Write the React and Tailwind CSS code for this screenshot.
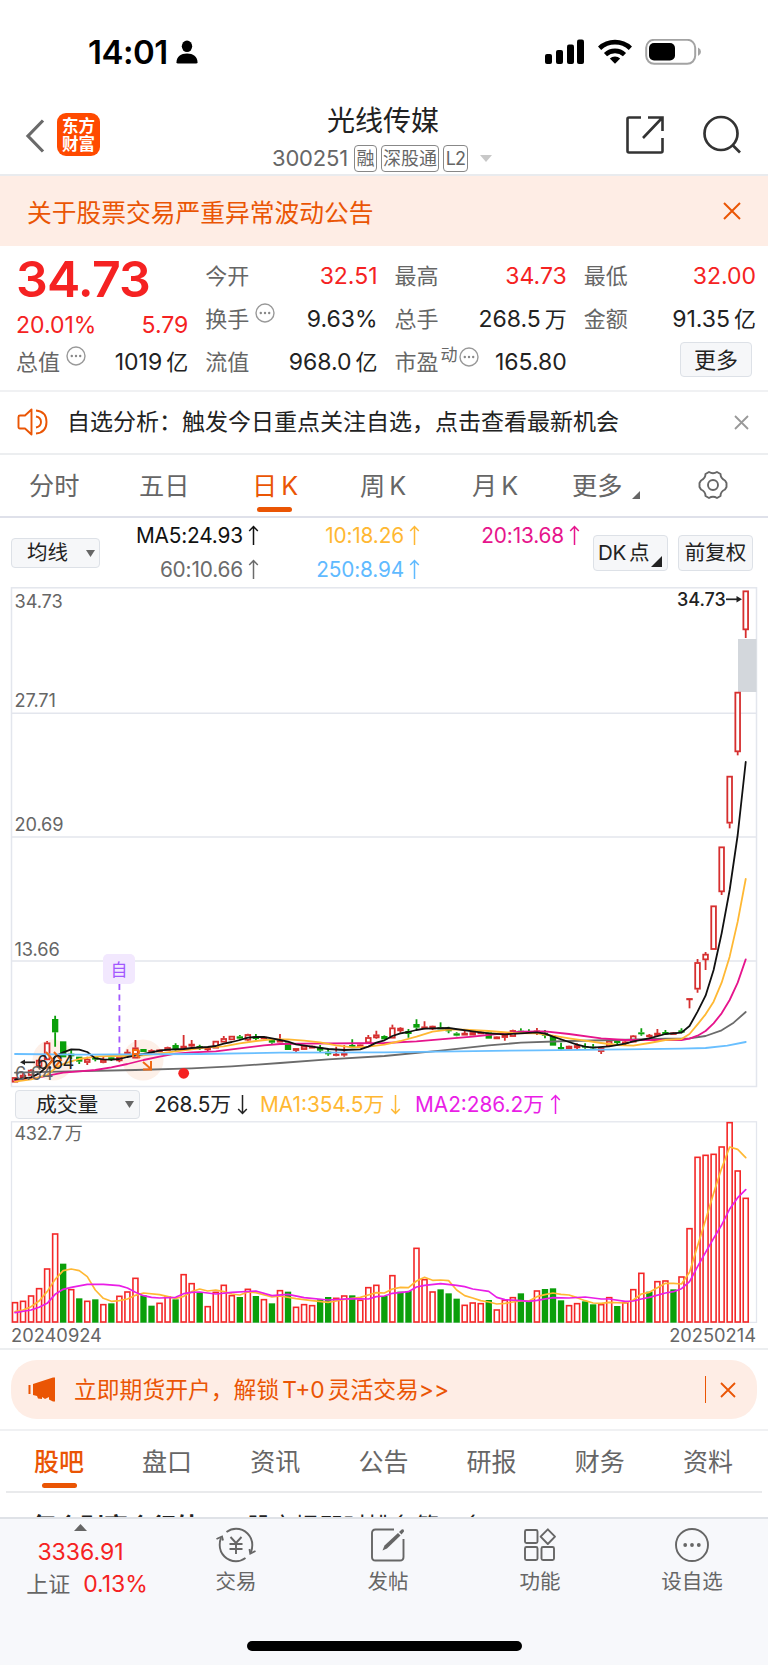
const X0 = 45;
const STEP = 24.09;
const barX = (i) => X0 + i * STEP;

// [up, high, body top, body bottom, low]
const CANDLES = [
  [1, 352, 352, 367, 367], [1, 338, 345, 354, 354], [1, 328, 330, 347, 347], [1, 298, 300, 320, 325],
  [1, 243, 248, 300, 300], [0, 167, 177, 217, 260], [0, 244, 244, 292, 292], [0, 270, 281, 289, 297],
  [0, 290, 290, 305, 312], [1, 290, 297, 308, 315], [0, 290, 290, 299, 304], [1, 288, 298, 308, 310],
  [0, 288, 292, 299, 303], [1, 280, 289, 303, 307], [1, 268, 276, 284, 284], [1, 240, 263, 295, 295],
  [0, 267, 267, 276, 276], [1, 268, 271, 279, 281], [1, 268, 269, 276, 276], [1, 260, 262, 272, 272],
  [0, 250, 255, 270, 272], [1, 225, 258, 266, 268], [1, 240, 252, 259, 262], [0, 254, 258, 266, 270],
  [1, 262, 263, 270, 275], [1, 243, 243, 265, 265], [1, 228, 235, 247, 247], [1, 228, 228, 240, 240],
  [0, 225, 229, 236, 240], [1, 221, 223, 241, 244], [0, 222, 229, 237, 241], [1, 230, 231, 237, 238],
  [0, 238, 240, 248, 251], [1, 222, 240, 247, 247], [0, 247, 247, 270, 270], [1, 264, 265, 272, 276],
  [1, 256, 258, 269, 269], [1, 257, 258, 265, 265], [0, 255, 262, 272, 278], [0, 265, 275, 283, 287],
  [1, 260, 282, 287, 289], [1, 255, 279, 286, 290], [0, 238, 255, 261, 264], [1, 253, 254, 262, 262],
  [1, 225, 232, 249, 251], [1, 212, 224, 234, 236], [0, 226, 228, 238, 238], [1, 194, 203, 235, 235],
  [1, 202, 204, 213, 218], [0, 207, 213, 222, 233], [0, 178, 192, 203, 210], [1, 184, 200, 206, 208],
  [1, 197, 198, 207, 210], [0, 187, 202, 208, 208], [0, 200, 206, 214, 220], [0, 217, 220, 227, 229],
  [1, 210, 219, 226, 226], [1, 214, 217, 226, 226], [1, 214, 216, 222, 222], [0, 217, 217, 236, 236],
  [1, 229, 230, 237, 237], [1, 223, 225, 233, 242], [1, 209, 211, 230, 230], [0, 205, 212, 218, 218],
  [0, 208, 213, 220, 220], [1, 204, 212, 219, 225], [0, 210, 218, 227, 235], [0, 227, 227, 257, 257],
  [0, 248, 261, 268, 270], [1, 257, 258, 267, 268], [1, 250, 256, 264, 270], [0, 250, 258, 263, 266],
  [0, 252, 260, 265, 267], [1, 262, 263, 275, 282], [1, 241, 243, 258, 258], [0, 242, 243, 249, 252],
  [1, 241, 245, 251, 255], [1, 225, 227, 247, 247], [0, 205, 217, 223, 227], [1, 222, 225, 231, 233],
  [1, 207, 219, 227, 229], [0, 210, 216, 223, 225], [1, 216, 218, 224, 224], [0, 205, 211, 218, 220],
  [1, 115, 115, 118, 145], [1, -3, 7, 88, 98], [1, -24, -18, 0, 30], [1, -163, -163, -31, -31],
  [1, -340, -340, -204, -195], [1, -552, -552, -410, -395], [1, -804, -804, -624, -614], [1, -1108, -1108, -990, -966],
];

// [bar index, y]
const PRICE_LINES = [
  {
    color: "#6b6b6b",
    data: [[0, 338], [7, 334], [15, 330], [22, 325], [27, 319], [33, 309], [39, 298], [46, 288], [53, 272], [59, 256], [63, 248], [69, 243], [75, 240], [81, 236], [84, 235], [86, 228], [88, 211], [89.5, 188], [91, 156]],
  },
  {
    color: "#e6148c",
    data: [[0, 362], [3, 352], [6, 338], [8, 334], [10, 330], [12, 322], [14, 312], [16, 300], [18, 290], [20, 281], [22, 277], [25, 274], [28, 265], [31, 256], [33, 252], [36, 251], [46, 249], [50, 244], [54, 236], [57, 230], [60, 222], [63, 215], [66, 214], [69, 222], [73, 235], [76, 240], [80, 240], [83, 240], [84, 236], [85, 227], [86, 213], [87, 190], [88, 160], [89, 120], [90, 68], [91, -2]],
  },
  {
    color: "#ffb833",
    data: [[0, 365], [2, 358], [4, 345], [5, 325], [6, 312], [7, 304], [8, 297], [10, 290], [12, 288], [14, 288], [16, 286], [18, 280], [20, 274], [22, 268], [24, 262], [26, 259], [28, 250], [30, 243], [32, 238], [34, 238], [36, 242], [38, 247], [40, 256], [42, 262], [44, 260], [46, 254], [48, 243], [50, 230], [52, 215], [54, 209], [56, 209], [59, 213], [62, 219], [65, 220], [67, 227], [69, 235], [71, 242], [73, 249], [75, 255], [77, 257], [79, 249], [81, 240], [83, 237], [84, 222], [85, 193], [86, 163], [87, 125], [88, 68], [89, -10], [90, -115], [91, -243]],
  },
  {
    color: "#111111",
    data: [[0, 358], [2, 352], [3, 340], [4, 320], [5, 290], [6, 277], [7, 268], [8, 269], [9, 276], [10, 295], [11, 298], [12, 299], [13, 297], [14, 291], [15, 286], [16, 282], [17, 277], [18, 272], [19, 269], [21, 267], [22, 264], [24, 261], [25, 258], [26, 251], [27, 246], [28, 240], [29, 233], [30, 231], [31, 231], [32, 235], [33, 240], [34, 245], [35, 253], [37, 260], [39, 267], [41, 270], [43, 268], [44, 260], [45, 248], [46, 241], [47, 228], [48, 220], [49, 216], [50, 210], [51, 206], [54, 204], [57, 214], [59, 220], [61, 223], [65, 217], [66, 221], [67, 230], [69, 246], [70, 254], [71, 260], [72, 263], [74, 259], [76, 251], [77, 244], [79, 235], [81, 222], [83, 218], [84, 198], [85, 155], [86, 107], [87, 30], [88, -80], [89, -210], [90, -375], [91, -594]],
  },
  {
    color: "#69bfff",
    data: [[0, 282], [8, 284], [23, 282], [33, 278], [46, 277], [65, 271], [76, 268], [83, 266], [86, 264], [88.7, 257], [91, 246]],
  },
];

// [up, bar top]
const VOLUMES = [
  [1, 577], [1, 573], [1, 557], [1, 535], [1, 476], [1, 371], [0, 461], [1, 538], [0, 565], [1, 573],
  [0, 568], [1, 583], [0, 580], [1, 558], [1, 545], [1, 504], [0, 556], [0, 587], [1, 579], [1, 560],
  [0, 568], [1, 493], [1, 520], [0, 546], [1, 589], [1, 546], [1, 525], [1, 556], [0, 561], [1, 537],
  [0, 558], [1, 568], [0, 580], [1, 541], [0, 545], [1, 591], [1, 583], [1, 586], [0, 568], [0, 561],
  [1, 564], [1, 557], [0, 556], [1, 570], [1, 532], [1, 525], [0, 558], [1, 496], [0, 545], [0, 543],
  [1, 414], [1, 508], [1, 545], [0, 538], [0, 550], [0, 566], [1, 585], [1, 578], [1, 580], [0, 570],
  [1, 599], [1, 570], [1, 562], [0, 550], [0, 572], [1, 542], [0, 537], [0, 535], [0, 571], [1, 586],
  [1, 580], [0, 574], [0, 583], [1, 583], [1, 562], [0, 588], [1, 577], [1, 538], [1, 489], [0, 545],
  [1, 514], [1, 512], [0, 538], [1, 500], [1, 355], [1, 141], [1, 135], [1, 132], [1, 110], [1, 37],
  [1, 182], [1, 264],
];

const VOLUME_LINES = [
  {
    color: "#ffb833",
    data: [[0, 605], [1, 600], [2, 590], [3, 573], [4, 545], [5, 508], [6, 482], [7, 477], [8, 482], [9, 500], [10, 540], [11, 565], [12, 574], [13, 572], [14, 567], [15, 556], [16, 549], [18, 554], [20, 565], [21, 559], [22, 545], [23, 537], [24, 543], [25, 540], [26, 545], [27, 552], [28, 555], [29, 546], [30, 548], [32, 561], [33, 558], [35, 566], [37, 572], [39, 577], [41, 568], [43, 562], [44, 555], [45, 548], [46, 549], [47, 537], [48, 532], [49, 533], [50, 513], [51, 502], [52, 511], [53, 510], [54, 512], [55, 540], [56, 557], [57, 564], [58, 572], [59, 576], [60, 582], [61, 580], [62, 576], [63, 573], [64, 573], [65, 560], [66, 554], [67, 549], [68, 553], [69, 555], [70, 563], [71, 572], [72, 579], [73, 580], [74, 577], [76, 579], [77, 570], [78, 552], [79, 547], [80, 533], [81, 520], [82, 520], [83, 522], [84, 487], [85, 408], [86, 330], [87, 250], [88, 175], [89, 111], [90, 118], [91, 143]],
  },
  {
    color: "#e91ee6",
    data: [[0, 608], [2, 600], [3, 592], [4, 580], [5, 553], [6, 538], [7, 532], [9, 523], [11, 523], [13, 527], [14, 534], [15, 547], [16, 557], [17, 562], [18, 564], [20, 562], [21, 551], [22, 547], [23, 546], [25, 552], [27, 547], [30, 543], [32, 557], [34, 553], [36, 563], [39, 570], [42, 566], [44, 567], [45, 560], [46, 558], [47, 550], [49, 545], [50, 531], [51, 526], [53, 521], [55, 526], [56, 530], [57, 537], [59, 544], [60, 562], [61, 569], [63, 572], [64, 574], [65, 571], [67, 563], [69, 564], [71, 561], [73, 567], [74, 567], [76, 574], [77, 573], [78, 567], [79, 562], [81, 549], [82, 545], [83, 536], [84, 515], [85, 470], [86, 427], [87, 385], [88, 345], [89, 297], [90, 263], [91, 239]],
  },
];

const toPoints = (data) => data.map(([i, y]) => `${barX(i)},${y}`).join(" ");

function Cross({ size, className, width = 2 }) {
  return (
    <svg width={size} height={size} viewBox={`0 0 ${size} ${size}`} className={className} stroke="currentColor" strokeWidth={width}>
      <path d={`M1 1L${size - 1} ${size - 1}M${size - 1} 1L1 ${size - 1}`} />
    </svg>
  );
}

function Arrow({ down, className = "" }) {
  return (
    <svg width="11" height="21" viewBox="0 0 11 21" fill="none" stroke="currentColor" strokeWidth="1.5" className={className}>
      {down ? <path d="M5.5 1V19.5M1.2 15L5.5 19.5L9.8 15" /> : <path d="M5.5 20V1.5M1.2 6L5.5 1.5L9.8 6" />}
    </svg>
  );
}

function Info({ className = "" }) {
  return (
    <svg width="20" height="20" viewBox="0 0 20 20" className={className}>
      <circle cx="10" cy="10" r="9" fill="none" stroke="#999" strokeWidth="1.4" />
      <circle cx="5.8" cy="10" r="1.2" fill="#888" />
      <circle cx="10" cy="10" r="1.2" fill="#888" />
      <circle cx="14.2" cy="10" r="1.2" fill="#888" />
    </svg>
  );
}

function StatusBar() {
  return (
    <div className="h-[102px] flex items-start pt-[36px] pl-[88px] pr-[67px]">
      <span className="text-[33px] leading-[33px] font-semibold tracking-[-0.5px] text-black">14:01</span>
      <svg width="22" height="24" viewBox="0 0 22 24" className="ml-[8px] mt-[4px]">
        <ellipse cx="11" cy="6.3" rx="5.2" ry="5.8" />
        <path d="M0.5 22.3C0.5 17 5 13.6 11 13.6S21.5 17 21.5 22.3Q21.5 23.5 20 23.5H2Q0.5 23.5 0.5 22.3Z" />
      </svg>
      <div className="flex-1" />
      <svg width="156" height="26" viewBox="0 0 156 26" className="mt-[3px]">
        <rect x="0" y="15" width="7" height="10" rx="2" />
        <rect x="11" y="11" width="7" height="14" rx="2" />
        <rect x="22" y="5.5" width="7" height="19.5" rx="2" />
        <rect x="32" y="0.5" width="7" height="24.5" rx="2" />
        <g fill="none" stroke="#000" strokeWidth="4.6">
          <path d="M54.6 9.2A22.5 22.5 0 0 1 85.4 9.2" />
          <path d="M60.5 15.6A14 14 0 0 1 79.5 15.6" />
        </g>
        <path d="M70 24.8L64.8 19.5A7.5 7.5 0 0 1 75.2 19.5Z" />
        <rect x="101.2" y="0.8" width="49" height="24" rx="8" fill="none" stroke="#a3a3a3" strokeWidth="2" />
        <rect x="104" y="4" width="26" height="17.5" rx="5" />
        <path d="M153 8.5Q156 10 156 12.8T153 17Z" fill="#a3a3a3" />
      </svg>
    </div>
  );
}

function Header() {
  return (
    <div className="h-[74px] flex items-start border-b-2 border-[#e9ebee] pl-[25px] pr-[25px]">
      <svg width="20" height="34" viewBox="0 0 20 34" fill="none" stroke="#6a6a6a" strokeWidth="3.2" className="mt-[17px]">
        <path d="M18 1.5L3 17L18 32.5" />
      </svg>
      <div className="w-[43px] h-[43px] ml-[12px] mt-[11px] rounded-[9px] bg-[#ff4a00] text-white font-semibold text-[16.5px] leading-[18px] flex flex-col items-center justify-center">
        <span>东方</span>
        <span>财富</span>
      </div>
      <div className="flex-1 flex flex-col items-center pl-[39px]">
        <div className="text-[28px] leading-[38px] text-[#222] ml-[2px]">光线传媒</div>
        <div className="flex items-center h-[30px] mt-[3px] text-[#666]">
          <span className="text-[22px] leading-[28px] tracking-[-0.2px] mr-[6px]">300251</span>
          <span className="h-[27px] w-[23px] border border-[#888] rounded-[4px] text-[18px] leading-[25px] text-center mr-[4px]">融</span>
          <span className="h-[27px] w-[58px] border border-[#888] rounded-[4px] text-[18px] leading-[25px] text-center mr-[4px]">深股通</span>
          <span className="h-[27px] w-[25px] border border-[#888] rounded-[4px] text-[18px] leading-[25px] text-center tracking-[-1px]">L2</span>
          <svg width="12" height="7" viewBox="0 0 12 7" fill="#c8c8c8" className="ml-[12px]">
            <path d="M0 0H12L6 7Z" />
          </svg>
        </div>
      </div>
      <svg width="40" height="40" viewBox="0 0 40 40" fill="none" stroke="#333" strokeWidth="2.6" className="mt-[13px]">
        <path d="M16 2.5H4Q2.5 2.5 2.5 4V36Q2.5 37.5 4 37.5H36Q37.5 37.5 37.5 36V23" />
        <path d="M23 2.5H37.5V16M37 3L18 23" />
      </svg>
      <svg width="42" height="42" viewBox="0 0 42 42" fill="none" stroke="#333" strokeWidth="2.7" className="ml-[36px] mt-[12px]">
        <circle cx="20" cy="19.5" r="16.5" />
        <path d="M31.5 31L39 38.5" />
      </svg>
    </div>
  );
}

function Stat({ label, value, unit, red, info, sup }) {
  return (
    <div className="h-[43px] flex items-center text-[23px] leading-[30px]">
      <span className="text-[#666] text-[22px]">{label}</span>
      {sup && <span className="text-[#666] text-[17px] mb-[14px] ml-[2px]">{sup}</span>}
      {info && <Info className={sup ? "mb-[9px] ml-[1px]" : "mb-[11px] ml-[6px]"} />}
      <span className={red ? "ml-auto text-[#f52222]" : "ml-auto text-[#222]"}>
        {value}
        {unit && <span className="ml-[4px] text-[22px]">{unit}</span>}
      </span>
    </div>
  );
}

function Quote() {
  return (
    <div className="h-[146px] flex gap-[17px] pt-[8px] pl-[16px] pr-[12px] border-b-2 border-[#f0f1f3]">
      <div className="flex-1">
        <div className="h-[47px] pt-[3px] flex items-center text-[50px] font-semibold tracking-[-0.8px] text-[#f52222]">34.73</div>
        <div className="h-[39px] pt-[9px] flex items-center justify-between text-[23px] text-[#f52222]">
          <span>20.01%</span>
          <span>5.79</span>
        </div>
        <Stat label="总值" value="1019" unit="亿" info />
      </div>
      <div className="flex-1">
        <Stat label="今开" value="32.51" red />
        <Stat label="换手" value="9.63%" info />
        <Stat label="流值" value="968.0" unit="亿" />
      </div>
      <div className="flex-1">
        <Stat label="最高" value="34.73" red />
        <Stat label="总手" value="268.5" unit="万" />
        <Stat label="市盈" value="165.80" sup="动" info />
      </div>
      <div className="flex-1">
        <Stat label="最低" value="32.00" red />
        <Stat label="金额" value="91.35" unit="亿" />
        <div className="flex justify-end pr-[4px]">
          <button className="mt-[2px] w-[72px] h-[35px] rounded-[4px] border border-[#dde1e7] bg-[#f6f7f9] text-[22px] leading-[32px] text-[#222]">更多</button>
        </div>
      </div>
    </div>
  );
}

function KTabs() {
  return (
    <div className="h-[63px] flex items-start border-b-2 border-[#dfe1ea] pt-[12px] pl-[29px] text-[25.2px] leading-[38px] text-[#666]">
      <span className="w-[110px]">分时</span>
      <span className="w-[113px]">五日</span>
      <div className="w-[108px] text-[#ea5504]">
        <div className="flex gap-[4px]"><span>日</span><span>K</span></div>
        <div className="w-[35px] h-[5px] mt-[2px] ml-[5px] rounded-full bg-[#ea5504]" />
      </div>
      <span className="w-[112px] flex gap-[4px]"><span>周</span><span>K</span></span>
      <span className="w-[100px] flex gap-[4px]"><span>月</span><span>K</span></span>
      <span className="w-[126px] flex">
        更多
        <svg width="8" height="8" viewBox="0 0 8 8" fill="#666" className="mt-[24px] ml-[10px]"><path d="M8 0V8H0Z" /></svg>
      </span>
      <svg width="30" height="30" viewBox="0 0 30 30" fill="none" stroke="#666" strokeWidth="1.9" strokeLinejoin="round" className="mt-[3px]">
        <path d="M11 2Q15 4.500 19 2L22.500 4Q22.500 8.500 27 10.500L28.500 13V17L27 19.500Q22.500 21.500 22.500 26L19 28Q15 25.500 11 28L7.500 26Q7.500 21.500 3 19.500L1.500 17V13L3 10.500Q7.500 8.500 7.500 4Z" />
        <circle cx="15" cy="15" r="5" />
      </svg>
    </div>
  );
}

function MaCell({ className, children }) {
  return (
    <span className={`flex items-center justify-end gap-[5px] ${className}`}>
      {children}
      <Arrow />
    </span>
  );
}

function Indicators() {
  return (
    <div className="h-[69px] flex items-start pl-[11px] pr-[15px] text-[20.5px] text-[#222]">
      <div className="w-[89px] h-[30px] mt-[20px] rounded-[4px] border border-[#dde1e7] bg-[#f6f7f9] flex items-center justify-between pl-[15px] pr-[4px] leading-[28px]">
        均线
        <svg width="9" height="7" viewBox="0 0 9 7" fill="#666"><path d="M0 0H9L4.500 7Z" /></svg>
      </div>
      <div className="w-[482px] h-[67px] mt-[1px] grid grid-cols-[159px_161px_160px] grid-rows-2 text-[20.8px] tracking-[-0.15px]">
        <MaCell className="text-[#111]">MA5:24.93</MaCell>
        <MaCell className="text-[#ffb833]">10:18.26</MaCell>
        <MaCell className="text-[#e6148c]">20:13.68</MaCell>
        <MaCell className="text-[#6b6b6b]">60:10.66</MaCell>
        <MaCell className="text-[#5fbaff]">250:8.94</MaCell>
      </div>
      <div className="w-[75px] h-[36px] mt-[17px] ml-[11px] rounded-[4px] border border-[#dde1e7] bg-[#f6f7f9] flex leading-[34px] pl-[4px]">
        <span className="tracking-[-0.3px]">DK</span>
        <span className="ml-[3px]">点</span>
        <svg width="11" height="11" viewBox="0 0 11 11" fill="#222" className="mt-[20px] ml-[2px] shrink-0"><path d="M11 0V11H0Z" /></svg>
      </div>
      <div className="w-[75px] h-[36px] mt-[17px] ml-[10px] rounded-[4px] border border-[#dde1e7] bg-[#f6f7f9] leading-[34px] text-center">前复权</div>
    </div>
  );
}

function Candle({ i, up, high, top, bottom, low }) {
  const x = barX(i);
  const color = up ? "#d62f2f" : "#0a9f0a";
  return (
    <g stroke={color} strokeWidth="5.4">
      <path d={`M${x} ${high}V${top}M${x} ${bottom}V${low}`} />
      {up ? (
        <rect x={x - 7} y={top + 2} width="14" height={Math.max(bottom - top - 4, 1)} fill="#fff" />
      ) : (
        <rect x={x - 9.5} y={top} width="19" height={bottom - top} fill={color} stroke="none" />
      )}
    </g>
  );
}

function PriceChart() {
  return (
    <svg width="768" height="501" viewBox="0 0 768 501" className="block font-['Inter','Noto_Sans_CJK_SC',sans-serif]">
      <g fill="none" stroke="#e3e6ed" strokeWidth="1.5">
        <rect x="11.5" y="0.8" width="745" height="498.7" />
        <path d="M12 126.300H756M12 250H756M12 374H756" />
      </g>
      <rect x="738" y="52" width="18.5" height="53" fill="#d3d7dc" />
      <circle cx="53" cy="473" r="20.5" fill="#fdf0e8" />
      <circle cx="143" cy="473" r="20.5" fill="#fdf0e8" />
      <g fontSize="18.2" fill="#666" letterSpacing="-0.1">
        <text x="14.5" y="21">34.73</text>
        <text x="14.5" y="120">27.71</text>
        <text x="14.5" y="244">20.69</text>
        <text x="14.5" y="368.5">13.66</text>
      </g>
      <path d="M119.400 397V468" stroke="#a259ff" strokeWidth="1.8" strokeDasharray="6 4.5" />
      <rect x="103" y="367" width="32" height="30" rx="5" fill="#f2e8fe" />
      <text x="119" y="388.5" fontSize="17" fill="#a259ff" textAnchor="middle">自</text>
      <g transform="translate(0 373) scale(0.33333)">
        {CANDLES.map(([up, high, top, bottom, low], i) => (
          <Candle key={i} i={i} up={up} high={high} top={top} bottom={bottom} low={low} />
        ))}
        {PRICE_LINES.map((line) => (
          <polyline key={line.color} points={toPoints(line.data)} fill="none" stroke={line.color} strokeWidth="5.4" strokeLinejoin="round" strokeLinecap="round" />
        ))}
      </g>
      <g fill="none" stroke="#f06a14" strokeWidth="2">
        <path d="M46 465L53 473L46 481M54 465L61 473L54 481" />
        <path d="M133 470V463H137.500Q139 463 139 465T137.500 467H133M136 467L140 471" />
        <path d="M143 475L151 482M151 474V482.500H143" />
      </g>
      <circle cx="183.7" cy="486.3" r="5.4" fill="#f52222" />
      <g fontSize="18.2">
        <text x="15" y="493" fill="#666">6.64</text>
        <text x="37" y="482" fill="#222" letterSpacing="-0.4">6.64</text>
        <text x="677" y="18.5" fill="#222" fontWeight="500" fontSize="18">34.73</text>
      </g>
      <g stroke="#222" strokeWidth="1.7" fill="#222">
        <path d="M23 475.300H35" />
        <path d="M20 475.300L25 472.500V478Z" stroke="none" />
        <path d="M726 12.300H737" />
        <path d="M742 12.300L736.500 9V15.600Z" stroke="none" />
      </g>
    </svg>
  );
}

function VolumeHeader() {
  return (
    <div className="h-[33px] flex items-start pt-[2px] pl-[15px] text-[20.8px] leading-[29px]">
      <div className="w-[125px] h-[29px] rounded-[4px] border border-[#dde1e7] bg-[#f6f7f9] flex items-center justify-between pl-[20px] pr-[5px] text-[#222]">
        成交量
        <svg width="9" height="7" viewBox="0 0 9 7" fill="#666"><path d="M0 0H9L4.500 7Z" /></svg>
      </div>
      <span className="w-[106px] ml-[14px] flex items-center text-[#222]">268.5万<Arrow down className="ml-[6px]" /></span>
      <span className="w-[155px] flex items-center text-[#ffb833]">MA1:354.5万<Arrow down className="ml-[6px]" /></span>
      <span className="flex items-center text-[#e91ee6]">MA2:286.2万<Arrow className="ml-[6px]" /></span>
    </div>
  );
}

function VolumeChart() {
  return (
    <svg width="768" height="202" viewBox="0 0 768 202" className="block font-['Inter','Noto_Sans_CJK_SC',sans-serif]">
      <rect x="11.5" y="0.8" width="745" height="200.6" fill="none" stroke="#e3e6ed" strokeWidth="1.3" />
      <text x="14.5" y="18.5" fontSize="18" letterSpacing="-0.3" fill="#666">432.7<tspan dx="3">万</tspan></text>
      <g transform="translate(0 -11) scale(0.33333)">
        {VOLUMES.map(([up, top], i) =>
          up ? (
            <rect key={i} x={barX(i) - 7.5} y={top + 1} width="15" height={635 - top} fill="#fff" stroke="#f42828" strokeWidth="4.8" />
          ) : (
            <rect key={i} x={barX(i) - 9.5} y={top} width="19" height={638 - top} fill="#0a9f0a" />
          )
        )}
        {VOLUME_LINES.map((line) => (
          <polyline key={line.color} points={toPoints(line.data)} fill="none" stroke={line.color} strokeWidth="5" strokeLinejoin="round" strokeLinecap="round" />
        ))}
      </g>
    </svg>
  );
}

const INFO_TABS = ["盘口", "资讯", "公告", "研报", "财务", "资料"];

function InfoTabs() {
  return (
    <div className="h-[62px] mx-[6px] border-b-2 border-[#e9eaec] pt-[12px] pl-[28px] flex text-[25px] leading-[38px] text-[#666]">
      <div className="w-[108px] shrink-0 text-[#ea5504]">
        <div className="font-medium">股吧</div>
        <div className="w-[35px] h-[5px] mt-[2px] ml-[8px] rounded-full bg-[#ea5504]" />
      </div>
      {INFO_TABS.map((tab) => (
        <span key={tab} className="w-[108.2px] shrink-0">{tab}</span>
      ))}
    </div>
  );
}

const ACTIONS = [
  {
    label: "交易",
    icon: (
      <svg width="42" height="36" viewBox="0 0 42 36" fill="none" stroke="#666" strokeWidth="1.9">
        <path d="M11.500 5Q16 1.700 21 1.700A16.300 16.300 0 0 1 37.300 18Q37.300 22 36 25" />
        <path d="M30.500 31Q26 34.300 21 34.300A16.300 16.300 0 0 1 4.700 18Q4.700 14 6 11" />
        <path d="M1.500 12L7 9.500L8 13.500M40.500 24L35.300 26.500L34.500 22" />
        <path d="M15.500 10L21 16L26.500 10M21 16V27M14.500 17H27.500M14.500 22H27.500" />
      </svg>
    ),
  },
  {
    label: "发帖",
    icon: (
      <svg width="36" height="36" viewBox="0 0 36 36" fill="none" stroke="#666" strokeWidth="1.9">
        <path d="M24 2.500H5.500Q2 2.500 2 6V30Q2 33.500 5.500 33.500H30Q33.500 33.500 33.500 30V12" />
        <path d="M12.500 23.500L14.500 18.500L28 6L30.500 8.500L17 21.500Z" fill="#666" stroke="none" />
        <path d="M29 5L32 2.200Q34.500 2 34 4.500L31.500 7.500Z" fill="#666" stroke="none" />
      </svg>
    ),
  },
  {
    label: "功能",
    icon: (
      <svg width="34" height="36" viewBox="0 0 34 36" fill="none" stroke="#666" strokeWidth="1.9">
        <rect x="2" y="3" width="12.5" height="13" rx="1.5" />
        <rect x="2" y="20" width="12.5" height="13" rx="1.5" />
        <rect x="18.5" y="20" width="12.5" height="13" rx="1.5" />
        <path d="M24.800 2.300L32 9.600L24.800 17L17.600 9.600Z" strokeLinejoin="round" />
      </svg>
    ),
  },
  {
    label: "设自选",
    icon: (
      <svg width="36" height="36" viewBox="0 0 36 36" fill="none" stroke="#666" strokeWidth="1.9">
        <circle cx="18" cy="18" r="16" />
        <g fill="#666" stroke="none">
          <circle cx="11.2" cy="18" r="1.9" />
          <circle cx="18" cy="18" r="1.9" />
          <circle cx="24.8" cy="18" r="1.9" />
        </g>
      </svg>
    ),
  },
];

function BottomBar() {
  return (
    <div className="h-[148px] border-t-2 border-[#dfe2e7] bg-[#f7f8fb] flex flex-col items-center">
      <div className="flex w-full h-[122px]">
        <div className="w-[160px] flex flex-col items-center pt-[5px] text-[23px] text-[#f52222]">
          <svg width="13" height="7" viewBox="0 0 13 7" fill="#666"><path d="M0 7H13L6.500 0Z" /></svg>
          <span className="leading-[28px] mt-[7px] ml-[1px]">3336.91</span>
          <span className="leading-[28px] mt-[4px] ml-[14px] flex gap-[13px]">
            <span className="text-[22px] text-[#666]">上证</span>
            0.13%
          </span>
        </div>
        {ACTIONS.map((action) => (
          <div key={action.label} className="w-[152px] flex flex-col items-center pt-[8px]">
            {action.icon}
            <span className="mt-[5px] text-[20.5px] leading-[28px] text-[#666]">{action.label}</span>
          </div>
        ))}
      </div>
      <div className="w-[275px] h-[9.5px] rounded-full bg-black" />
    </div>
  );
}

export default function App() {
  return (
    <div className="w-[768px] h-[1665px] overflow-hidden bg-white font-['Inter','Noto_Sans_CJK_SC',sans-serif]">
      <StatusBar />
      <Header />

      <div className="h-[70px] flex items-center justify-between bg-[#feede5] pl-[27px] pr-[27px] text-[24.75px] text-[#ea5504]">
        <span className="mt-[5px]">关于股票交易严重异常波动公告</span>
        <Cross size={18} className="mb-[1px]" />
      </div>

      <Quote />

      <div className="h-[63px] flex items-center border-b-2 border-[#eceef0] pl-[17px] pr-[19px] pb-[1px] text-[23px] text-[#222]">
        <svg width="32" height="28" viewBox="0 0 32 28" fill="none" stroke="#ea5504" strokeWidth="1.9" strokeLinejoin="round">
          <path d="M14.500 1.500V26.500L8 20.500H3Q1.500 20.500 1.500 19V9Q1.500 7.500 3 7.500H8Z" />
          <path d="M19 2.500Q29.500 3.500 29.500 14T19 25.500M19 8.500Q24 9.500 24 14T19 19.500" />
        </svg>
        <span className="ml-[18px]">自选分析：触发今日重点关注自选，点击查看最新机会</span>
        <Cross size={15} width={1.8} className="ml-auto text-[#999]" />
      </div>

      <KTabs />
      <Indicators />
      <PriceChart />
      <VolumeHeader />
      <VolumeChart />

      <div className="h-[27px] flex justify-between border-b-2 border-[#eceef0] pl-[11px] pr-[12px] text-[18.3px] leading-[25px] text-[#666]">
        <span>20240924</span>
        <span>20250214</span>
      </div>

      <div className="h-[81px] pt-[10px] px-[11px] border-b-2 border-[#f0f1f3]">
        <div className="h-[59px] rounded-[26px] bg-[#feede5] flex items-center pl-[17px] pr-[21px] text-[22.8px] text-[#ea5504]">
          <svg width="28" height="25" viewBox="0 0 28 25" fill="#ea5504">
            <path d="M0.500 8H2.500V17H0.500ZM5 7L25 0.500H27V24.500H25L21 22.500V20L17 22L14 20V22L10 21.500L9 19L5 18Z" />
          </svg>
          <span className="ml-[18px] mt-[1px]">立即期货开户，解锁</span>
          <span className="ml-[3px] mt-[1px]">T+0</span>
          <span className="ml-[3px] mt-[1px]">灵活交易&gt;&gt;</span>
          <div className="ml-auto w-[1.5px] h-[27px] bg-[#ea5504]" />
          <Cross size={16} width={1.8} className="ml-[14px]" />
        </div>
      </div>

      <InfoTabs />

      <div className="h-[24px] overflow-hidden flex pt-[20.5px] pl-[32px] text-[24px] leading-[26px] text-[#222]">
        <span className="w-[215px] font-semibold">每个别高个行外</span>
        <span className="w-[434px]">股市提即时排名第一名</span>
        <span className="text-[#f52222]">››</span>
      </div>

      <BottomBar />
    </div>
  );
}
